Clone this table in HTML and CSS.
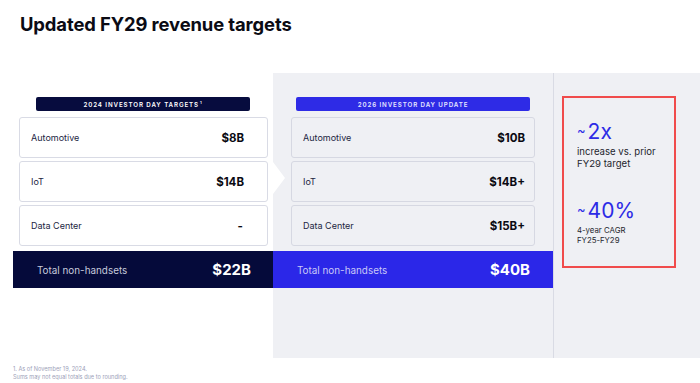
FILE: index.html
```html
<!DOCTYPE html>
<html>
<head>
<meta charset="utf-8">
<link rel="stylesheet" href="styles.css">
</head>
<body>
<div class="slide">
  <h1 class="title">Updated FY29 revenue targets</h1>
  <div class="main">
    <div class="col col-old">
      <div class="pill pill-old">2024 INVESTOR DAY TARGETS<sup>1</sup></div>
      <div class="cards">
        <div class="card"><span class="label">Automotive</span><span class="value">$8B</span></div>
        <div class="card"><span class="label">IoT</span><span class="value">$14B</span></div>
        <div class="card"><span class="label">Data Center</span><span class="value dash">-</span></div>
      </div>
      <div class="total total-old"><span class="tlabel">Total non-handsets</span><span class="tvalue">$22B</span></div>
    </div>
    <div class="col col-new">
      <div class="pill pill-new">2026 INVESTOR DAY UPDATE</div>
      <div class="cards">
        <div class="card card-new"><span class="label">Automotive</span><span class="value">$10B</span></div>
        <div class="card card-new"><span class="label">IoT</span><span class="value">$14B+</span></div>
        <div class="card card-new"><span class="label">Data Center</span><span class="value">$15B+</span></div>
      </div>
      <div class="total total-new"><span class="tlabel">Total non-handsets</span><span class="tvalue">$40B</span></div>
    </div>
    <div class="col col-side">
      <div class="callout">
        <div class="stat">
          <div class="big"><span class="tilde">~</span>2x</div>
          <div class="desc">increase vs. prior<br>FY29 target</div>
        </div>
        <div class="stat stat2">
          <div class="big"><span class="tilde">~</span>40%</div>
          <div class="desc small">4-year CAGR<br>FY25-FY29</div>
        </div>
      </div>
    </div>
  </div>
  <div class="foot">
    <div>1. As of November 19, 2024.</div>
    <div>Sums may not equal totals due to rounding.</div>
  </div>
</div>
</body>
</html>
```

FILE: styles.css
```css
* { box-sizing: border-box; }
html, body { margin: 0; padding: 0; background: #ffffff; }
body { font-family: Inter, "Noto Sans", "Liberation Sans", sans-serif; color: #1d2040; }
.slide { width: 700px; height: 383px; overflow: hidden; position: relative; }

.title {
  margin: 0;
  padding: 12px 0 0 20px;
  font-size: 18.4px;
  line-height: 24px;
  font-weight: 700;
  color: #0b0b14;
  letter-spacing: -0.1px;
}

.main {
  display: flex;
  margin-top: 37px;
  height: 285px;
}

.col { display: flex; flex-direction: column; }
.col-old { width: 273px; padding-top: 24px; }
.col-new {
  width: 281px;
  padding-top: 24px;
  background: #eff0f4;
  border-right: 1px solid #d9dbe4;
  position: relative;
}
.col-new::before {
  content: "";
  position: absolute;
  left: 0;
  top: 89px;
  border-top: 16px solid transparent;
  border-bottom: 16px solid transparent;
  border-left: 12px solid #ffffff;
}
.col-side { flex: 1; background: #eff0f4; padding-top: 23px; }

.pill {
  height: 14px;
  border-radius: 2px;
  color: #ffffff;
  font-size: 6.2px;
  font-weight: 600;
  letter-spacing: 0.9px;
  display: flex;
  align-items: center;
  justify-content: center;
}
.pill sup { font-size: 4px; vertical-align: 0; position: relative; top: -2px; margin-left: 1px; }
.pill-old { margin-left: 36px; width: 214px; background: #070c3e; }
.pill-new { margin-left: 23px; width: 234px; background: #2e2be6; color: #e6e6ff; }

.cards { display: flex; flex-direction: column; gap: 3px; margin-top: 6px; }
.card {
  height: 41px;
  border: 1px solid #d9dbe5;
  border-radius: 3px;
  background: #ffffff;
  display: flex;
  align-items: center;
  justify-content: space-between;
  padding: 0 23px 0 11px;
}
.col-old .card { margin-left: 19px; width: 249px; }
.card-new { margin-left: 18px; width: 244px; background: #eff0f4; border-color: #d6d8e2; padding: 0 9px 0 11px; }
.label { font-size: 9px; color: #22253f; }
.value { font-size: 11.5px; font-weight: 700; color: #0a0a12; }
.value.dash { padding-right: 1px; }

.total {
  margin-top: 5px;
  height: 37px;
  display: flex;
  align-items: center;
  justify-content: space-between;
}
.total-old { margin-left: 13px; width: 260px; background: #050a3a; padding: 0 22px 0 24px; }
.total-new { width: 280px; background: #2b27e8; padding: 0 23px 0 24px; }
.tlabel { font-size: 9.9px; color: #c7cadc; }
.total-new .tlabel { color: #c9c8f7; }
.tvalue { font-size: 15px; font-weight: 700; color: #ffffff; }

.callout {
  margin-left: 8px;
  width: 114px;
  height: 172px;
  border: 2px solid #f04b4b;
  padding: 22px 0 0 13px;
}
.big {
  font-size: 21px;
  line-height: 24px;
  color: #2d2be6;
  font-weight: 400;
}
.tilde { font-size: 13px; margin-right: 2px; position: relative; top: -4px; }
.desc { font-size: 9.6px; line-height: 12px; color: #25262e; margin-top: 0; }
.desc.small { font-size: 7.8px; line-height: 9.5px; margin-top: 1px; }
.stat2 { margin-top: 29px; }

.foot {
  padding: 7px 0 0 13px;
  font-size: 5.6px;
  line-height: 8px;
  color: #9ca1b8;
}
```
